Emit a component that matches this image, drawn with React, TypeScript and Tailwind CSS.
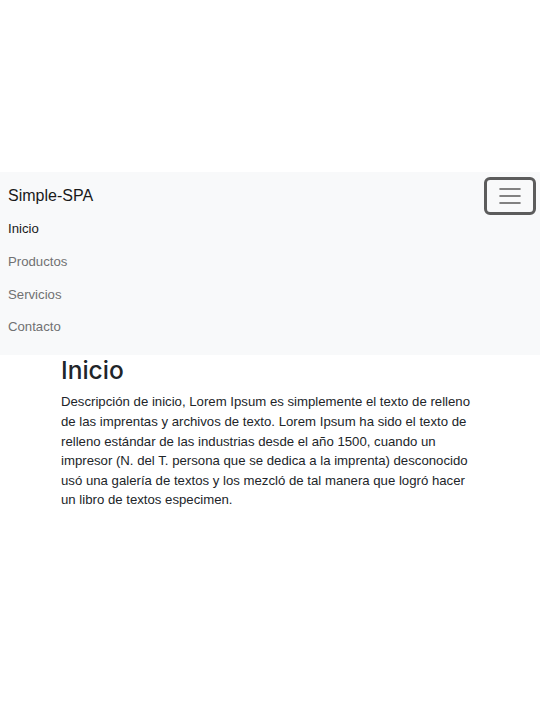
export default function App() {
  const font = { fontFamily: '"Liberation Sans", Arial, sans-serif' };
  const heading = { fontFamily: 'Inter, "Liberation Sans", Arial, sans-serif' };
  return (
    <div className="min-h-[720px] w-[540px] bg-white text-[#212529]" style={font}>
      <div className="h-[172px]" />
      <nav className="bg-[#f8f9fa] pt-[6px] pb-[12px]">
        <div className="flex h-[35px] items-center justify-between pl-[8px] pr-[4px]">
          <span className="text-[16px] leading-[24px] text-[#1a1a1a]">Simple-SPA</span>
          <button className="flex h-[38px] w-[52px] items-center justify-center rounded-[6px] border-[3px] border-[#5c5c5c] bg-transparent">
            <svg width="22" height="18" viewBox="0 0 22 18" fill="none">
              <path d="M1 2h20M1 9h20M1 16h20" stroke="#595959" strokeWidth="1.6" strokeLinecap="round" />
            </svg>
          </button>
        </div>
        <ul className="flex flex-col pl-[8px]">
          <li className="flex h-[32.6px] items-center text-[13.2px] text-[#1a1a1a]">Inicio</li>
          <li className="flex h-[32.6px] items-center text-[13.2px] text-[#707172]">Productos</li>
          <li className="flex h-[32.6px] items-center text-[13.2px] text-[#707172]">Servicios</li>
          <li className="flex h-[32.6px] items-center text-[13.2px] text-[#707172]">Contacto</li>
        </ul>
      </nav>
      <main className="ml-[61px] w-[414px]">
        <h1 className="mb-[6px] text-[24.5px] font-medium leading-[31px]" style={heading}>Inicio</h1>
        <p className="text-[13.2px] leading-[19.6px]">
          Descripción de inicio, Lorem Ipsum es simplemente el texto de relleno de las imprentas y archivos de texto. Lorem Ipsum ha sido el texto de relleno estándar de las industrias desde el año 1500, cuando un impresor (N. del T. persona que se dedica a la imprenta) desconocido usó una galería de textos y los mezcló de tal manera que logró hacer un libro de textos especimen.
        </p>
      </main>
    </div>
  );
}
